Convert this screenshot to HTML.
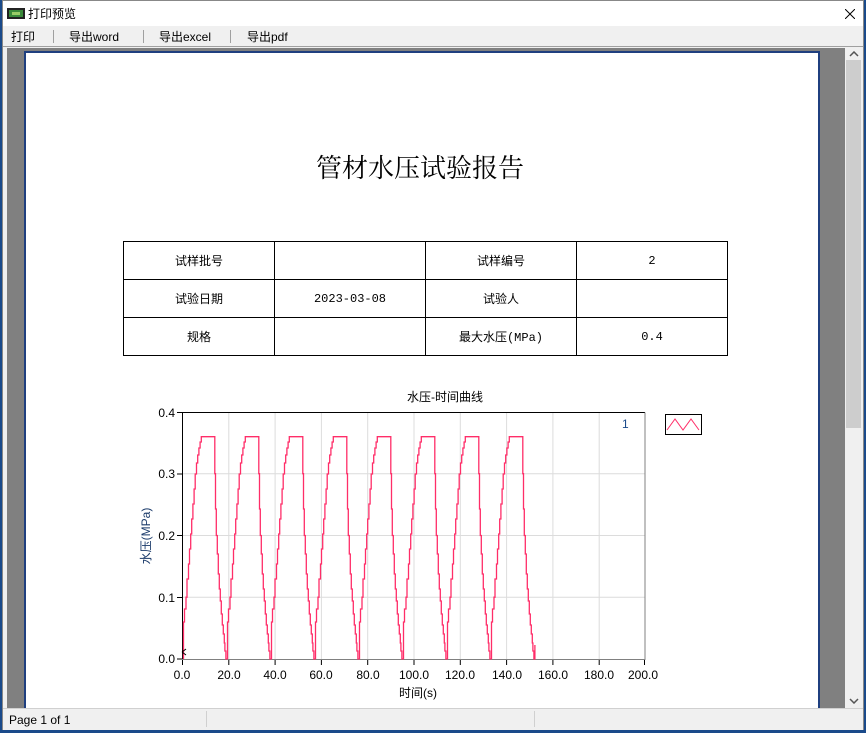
<!DOCTYPE html>
<html><head><meta charset="utf-8"><style>
*{margin:0;padding:0;box-sizing:border-box}
body{width:866px;height:733px;overflow:hidden;background:#1a4a8a;font-family:"Liberation Sans","Noto Sans CJK SC",sans-serif;position:relative}
.win{position:absolute;left:2px;top:0;width:862px;height:730px;background:#f0f0f0;border:1px solid #888}
.title{position:absolute;left:0;top:0;width:100%;height:25px;background:#fff;font-size:12px}
.title span{position:absolute;left:25px;top:4px;color:#000}
.menu{position:absolute;left:0;top:25px;width:100%;height:21px;background:#f0f0f0;border-bottom:1px solid #a0a0a0;font-size:12px}
.menu span{position:absolute;top:2px}
.menu i{position:absolute;top:4px;width:1px;height:13px;background:#a0a0a0}
.gray{position:absolute;left:4px;top:47px;width:838px;height:660px;background:#808080}
.page{position:absolute;left:17px;top:3px;width:796px;height:660px;background:#fff;border:2px solid #1f3f7f;border-bottom:none}
.sb{position:absolute;left:842px;top:47px;width:18px;height:660px;background:#f0f0f0}
.status{position:absolute;left:0;top:707px;width:100%;height:22px;background:#f0f0f0;border-top:1px solid #d0d0d0;font-size:12px}
table{position:absolute;border-collapse:collapse;font-size:12px;font-family:"Liberation Mono","Noto Sans CJK SC",monospace}
td{border:1px solid #000;text-align:center;width:151px;height:38px}
</style></head><body>
<div class="win">
 <div class="title">
  <svg style="position:absolute;left:4px;top:7px" width="18" height="11"><rect x="0" y="0" width="18" height="11" fill="#222"/><rect x="2" y="2" width="14" height="7" fill="#3a8a3a"/><rect x="5" y="4" width="8" height="3" fill="#9c6"/></svg>
  <span>打印预览</span>
  <svg style="position:absolute;left:842px;top:8px" width="10" height="10"><path d="M0 0L10 10M10 0L0 10" stroke="#000" stroke-width="1"/></svg>
 </div>
 <div class="menu">
  <span style="left:8px">打印</span><i style="left:50px"></i>
  <span style="left:66px">导出word</span><i style="left:140px"></i>
  <span style="left:156px">导出excel</span><i style="left:227px"></i>
  <span style="left:244px">导出pdf</span>
 </div>
 <div class="gray"><div class="page"></div></div>
 <div class="sb">
  <svg style="position:absolute;left:4px;top:3px" width="10" height="6"><path d="M1 5L5 1L9 5" stroke="#555" fill="none" stroke-width="1.5"/></svg>
  <div style="position:absolute;left:1px;top:12px;width:15px;height:368px;background:#cdcdcd"></div>
  <svg style="position:absolute;left:4px;top:650px" width="10" height="6"><path d="M1 1L5 5L9 1" stroke="#555" fill="none" stroke-width="1.5"/></svg>
 </div>
 <div class="status"><span style="position:absolute;left:6px;top:4px">Page 1 of 1</span>
  <i style="position:absolute;left:203px;top:2px;width:1px;height:16px;background:#d0d0d0"></i>
  <i style="position:absolute;left:531px;top:2px;width:1px;height:16px;background:#d0d0d0"></i></div>
</div>
<div style="position:absolute;left:316px;top:148px;font-size:26px;font-family:'Noto Serif CJK SC','Noto Sans CJK SC',serif;color:#000;white-space:nowrap">管材水压试验报告</div>
<table style="left:123px;top:241px">
<tr><td>试样批号</td><td></td><td>试样编号</td><td>2</td></tr>
<tr><td>试验日期</td><td>2023-03-08</td><td>试验人</td><td></td></tr>
<tr><td>规格</td><td></td><td>最大水压(MPa)</td><td>0.4</td></tr>
</table>
<svg style="position:absolute;left:0;top:0" width="866" height="733" font-family="Liberation Sans,Noto Sans CJK SC,sans-serif" font-size="12">
<g stroke="#dcdcdc" stroke-width="1">
<path d="M228.8 412V659M275.1 412V659M321.4 412V659M367.7 412V659M414 412V659M460.3 412V659M506.6 412V659M552.9 412V659M599.2 412V659"/>
<path d="M182 473.8H645M182 535.5H645M182 597.3H645"/>
</g>
<path d="M182.5 659.5V412.5H645" stroke="#000" fill="none"/>
<path d="M645 412.5V659.5H182" stroke="#808080" fill="none"/>
<g stroke="#000"><path d="M177 412.5h5M177 474h5M177 535.5h5M177 597.5h5M177 659h5"/>
<path d="M182.5 660v5M228.8 660v5M275.1 660v5M321.4 660v5M367.7 660v5M414 660v5M460.3 660v5M506.6 660v5M552.9 660v5M599.2 660v5M644.5 660v5"/></g>
<g text-anchor="end" fill="#000"><text x="175" y="417">0.4</text><text x="175" y="478">0.3</text><text x="175" y="540">0.2</text><text x="175" y="602">0.1</text><text x="175" y="663">0.0</text></g>
<g text-anchor="middle" fill="#000"><text x="182" y="679">0.0</text><text x="229" y="679">20.0</text><text x="275" y="679">40.0</text><text x="321" y="679">60.0</text><text x="368" y="679">80.0</text><text x="414" y="679">100.0</text><text x="460" y="679">120.0</text><text x="507" y="679">140.0</text><text x="553" y="679">160.0</text><text x="599" y="679">180.0</text><text x="643" y="679">200.0</text>
<text x="418" y="697">时间(s)</text><text x="445" y="401">水压-时间曲线</text></g>
<text transform="translate(150 536) rotate(-90)" text-anchor="middle" fill="#1a3a6a">水压(MPa)</text>
<text x="622" y="428" fill="#1a4a8a">1</text>
<defs><path id="cy" d="M0 0V-37H1V-50H2.5V-61.8H3.5V-80H5V-95H6V-110H7.2V-125H8.2V-140H9.4V-155H10.6V-170H11.7V-185H13V-196H14.2V-204H15.4V-211H16.6V-217H17.8V-222.3H31.3V-185.3H32V-150H32.8V-123.5H33.8V-105H34.8V-85H35.8V-70H36.8V-58H37.8V-45H38.8V-34H39.8V-25H40.8V-16H41.4V-8H42.4V0H44" fill="none" stroke="#ff2d68" stroke-width="1.3"/></defs>
<g transform="translate(183.5 659)">
<use href="#cy"/><use href="#cy" x="44"/><use href="#cy" x="88"/><use href="#cy" x="132"/><use href="#cy" x="176"/><use href="#cy" x="220"/><use href="#cy" x="264"/>
<path transform="translate(308 0)" d="M0 0V-37H1V-50H2.5V-61.8H3.5V-80H5V-95H6V-110H7.2V-125H8.2V-140H9.4V-155H10.6V-170H11.7V-185H13V-196H14.2V-204H15.4V-211H16.6V-217H17.8V-222.3H31.3V-185.3H32V-150H32.8V-123.5H33.8V-105H34.8V-85H35.8V-70H36.8V-58H37.8V-45H38.8V-34H39.8V-25H40.8V-16H41.4V-8H42.4V0H43.4V-14" fill="none" stroke="#ff2d68" stroke-width="1.3"/>
</g>
<path d="M182 652l4 -3M182 652l4 3" stroke="#000"/>
<rect x="665.5" y="414.5" width="36" height="20" fill="#fff" stroke="#000"/>
<path d="M667 430L675 419L683 430L691 419L699 430" stroke="#ff2d68" fill="none"/>
</svg>
</body></html>
